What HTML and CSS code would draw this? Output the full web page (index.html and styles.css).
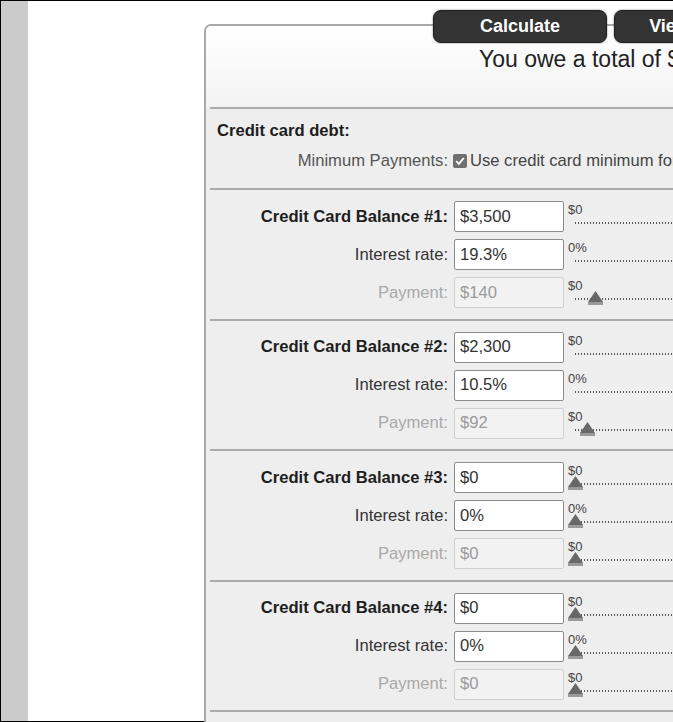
FILE: index.html
```html
<!DOCTYPE html>
<html lang="en">
<head>
<meta charset="utf-8">
<title>Credit card debt calculator</title>
<link rel="stylesheet" href="styles.css">
</head>
<body>
<div class="frame">
  <aside class="rail"></aside>
  <main class="main">
    <section class="panel">
      <div class="panel-top">
        <div class="actions">
          <button class="btn" type="button">Calculate</button>
          <button class="btn" type="button">View Report</button>
        </div>
        <p class="total">You owe a total of $5,800 in credit card debt.</p>
      </div>

      <div class="intro">
        <h2 class="intro-title">Credit card debt:</h2>
        <div class="min-row">
          <span class="min-label">Minimum Payments:</span>
          <span class="min-value">
            <svg class="check" width="14" height="14" viewBox="0 0 14 14"><rect width="14" height="14" rx="2" fill="#707070"/><path d="M3.2 7.2 L5.8 9.8 L10.8 4.2" stroke="#fff" stroke-width="1.9" fill="none"/></svg>
            Use credit card minimum for all payments
          </span>
        </div>
      </div>

      <div class="group">
        <div class="row">
          <label class="lbl lbl-strong">Credit Card Balance #1:</label>
          <input class="field" type="text" value="$3,500">
          <div class="slider"><span class="slider-min">$0</span><div class="track"></div></div>
        </div>
        <div class="row">
          <label class="lbl">Interest rate:</label>
          <input class="field" type="text" value="19.3%">
          <div class="slider"><span class="slider-min">0%</span><div class="track"></div></div>
        </div>
        <div class="row">
          <label class="lbl lbl-muted">Payment:</label>
          <input class="field field-off" type="text" value="$140" disabled>
          <div class="slider"><span class="slider-min">$0</span><div class="track"></div>
            <svg class="thumb" style="left:20px" width="15" height="14" viewBox="0 0 15 14"><polygon points="7.5,0 15,11 0,11" fill="#686868"/><rect x="0" y="11" width="15" height="3" fill="#9a9a9a"/></svg>
          </div>
        </div>
      </div>

      <div class="group">
        <div class="row">
          <label class="lbl lbl-strong">Credit Card Balance #2:</label>
          <input class="field" type="text" value="$2,300">
          <div class="slider"><span class="slider-min">$0</span><div class="track"></div></div>
        </div>
        <div class="row">
          <label class="lbl">Interest rate:</label>
          <input class="field" type="text" value="10.5%">
          <div class="slider"><span class="slider-min">0%</span><div class="track"></div></div>
        </div>
        <div class="row">
          <label class="lbl lbl-muted">Payment:</label>
          <input class="field field-off" type="text" value="$92" disabled>
          <div class="slider"><span class="slider-min">$0</span><div class="track"></div>
            <svg class="thumb" style="left:12px" width="15" height="14" viewBox="0 0 15 14"><polygon points="7.5,0 15,11 0,11" fill="#686868"/><rect x="0" y="11" width="15" height="3" fill="#9a9a9a"/></svg>
          </div>
        </div>
      </div>

      <div class="group">
        <div class="row">
          <label class="lbl lbl-strong">Credit Card Balance #3:</label>
          <input class="field" type="text" value="$0">
          <div class="slider"><span class="slider-min">$0</span><div class="track"></div>
            <svg class="thumb" style="left:0px" width="15" height="14" viewBox="0 0 15 14"><polygon points="7.5,0 15,11 0,11" fill="#686868"/><rect x="0" y="11" width="15" height="3" fill="#9a9a9a"/></svg>
          </div>
        </div>
        <div class="row">
          <label class="lbl">Interest rate:</label>
          <input class="field" type="text" value="0%">
          <div class="slider"><span class="slider-min">0%</span><div class="track"></div>
            <svg class="thumb" style="left:0px" width="15" height="14" viewBox="0 0 15 14"><polygon points="7.5,0 15,11 0,11" fill="#686868"/><rect x="0" y="11" width="15" height="3" fill="#9a9a9a"/></svg>
          </div>
        </div>
        <div class="row">
          <label class="lbl lbl-muted">Payment:</label>
          <input class="field field-off" type="text" value="$0" disabled>
          <div class="slider"><span class="slider-min">$0</span><div class="track"></div>
            <svg class="thumb" style="left:0px" width="15" height="14" viewBox="0 0 15 14"><polygon points="7.5,0 15,11 0,11" fill="#686868"/><rect x="0" y="11" width="15" height="3" fill="#9a9a9a"/></svg>
          </div>
        </div>
      </div>

      <div class="group">
        <div class="row">
          <label class="lbl lbl-strong">Credit Card Balance #4:</label>
          <input class="field" type="text" value="$0">
          <div class="slider"><span class="slider-min">$0</span><div class="track"></div>
            <svg class="thumb" style="left:0px" width="15" height="14" viewBox="0 0 15 14"><polygon points="7.5,0 15,11 0,11" fill="#686868"/><rect x="0" y="11" width="15" height="3" fill="#9a9a9a"/></svg>
          </div>
        </div>
        <div class="row">
          <label class="lbl">Interest rate:</label>
          <input class="field" type="text" value="0%">
          <div class="slider"><span class="slider-min">0%</span><div class="track"></div>
            <svg class="thumb" style="left:0px" width="15" height="14" viewBox="0 0 15 14"><polygon points="7.5,0 15,11 0,11" fill="#686868"/><rect x="0" y="11" width="15" height="3" fill="#9a9a9a"/></svg>
          </div>
        </div>
        <div class="row">
          <label class="lbl lbl-muted">Payment:</label>
          <input class="field field-off" type="text" value="$0" disabled>
          <div class="slider"><span class="slider-min">$0</span><div class="track"></div>
            <svg class="thumb" style="left:0px" width="15" height="14" viewBox="0 0 15 14"><polygon points="7.5,0 15,11 0,11" fill="#686868"/><rect x="0" y="11" width="15" height="3" fill="#9a9a9a"/></svg>
          </div>
        </div>
      </div>

      <div class="group"></div>
    </section>
  </main>
</div>
</body>
</html>
```

FILE: styles.css
```css
html, body {
  margin: 0;
  height: 100%;
  overflow: hidden;
  background: #fff;
}

body {
  font-family: "Liberation Sans", Arial, sans-serif;
  color: #222;
}

.frame {
  display: flex;
  height: 722px;
  box-sizing: border-box;
  border: 1px solid #000;
  border-right: none;
}

.rail {
  flex: none;
  width: 27px;
  background: #cbcbcb;
}

.main {
  flex: 1;
  min-width: 0;
  padding: 23px 0 0 176px;
}

.panel {
  width: 900px;
  border-top: 2px solid #a9a9a9;
  border-left: 2px solid #a9a9a9;
  border-top-left-radius: 7px;
  background: #eee;
}

.panel-top {
  display: flex;
  flex-direction: column;
  border-top-left-radius: 5px;
  background: linear-gradient(180deg, #ffffff 0%, #f3f3f3 100%);
  padding-bottom: 34px;
}

.actions {
  display: flex;
  gap: 7px;
  margin: -16px 0 0 227px;
}

.btn {
  flex: none;
  width: 174px;
  height: 33px;
  box-sizing: border-box;
  border: 1px solid #1f1f1f;
  border-radius: 8px;
  background: #333;
  box-shadow: 0 0 2px rgba(0, 0, 0, 0.55);
  color: #fff;
  font-family: "Liberation Sans", Arial, sans-serif;
  font-size: 18px;
  font-weight: bold;
  padding: 0;
}

.total {
  margin: 2px 0 0;
  padding-left: 273px;
  font-size: 23px;
  line-height: 28px;
  color: #222;
  white-space: nowrap;
}

.intro {
  margin-left: 4px;
  border-top: 2px solid #ababab;
  padding: 12px 0 17px;
}

.intro-title {
  margin: 0 0 0 7px;
  font-size: 16.6px;
  line-height: 20px;
  font-weight: bold;
  color: #1e1e1e;
}

.min-row {
  display: grid;
  grid-template-columns: 238px 1fr;
  column-gap: 5px;
  margin-top: 10px;
  font-size: 16.6px;
  line-height: 20px;
  color: #555;
  white-space: nowrap;
}

.min-label {
  text-align: right;
}

.min-value {
  display: flex;
  align-items: center;
  gap: 3px;
  color: #444;
}

.check {
  flex: none;
}

.group {
  display: flex;
  flex-direction: column;
  gap: 7px;
  margin-left: 4px;
  border-top: 2px solid #ababab;
  padding: 11px 0 10.5px;
}

.row {
  display: grid;
  grid-template-columns: 244px 114px 1fr;
  align-items: center;
  height: 31px;
}

.lbl {
  padding-right: 6px;
  text-align: right;
  font-size: 16.6px;
  color: #333;
  white-space: nowrap;
}

.lbl-strong {
  font-weight: bold;
  color: #1e1e1e;
}

.lbl-muted {
  color: #a9a9a9;
}

.field {
  width: 110px;
  height: 31px;
  box-sizing: border-box;
  margin: 0;
  padding: 0 5px;
  border: 1px solid #8c8c8c;
  border-radius: 2px;
  background: #fff;
  color: #333;
  font-family: "Liberation Sans", Arial, sans-serif;
  font-size: 16.6px;
}

.field-off {
  border-color: #cfcfcf;
  background: #f2f2f2;
  color: #9a9a9a;
}

.slider {
  position: relative;
  align-self: stretch;
}

.slider-min {
  display: block;
  margin-top: 3px;
  font-size: 13px;
  line-height: 12px;
  color: #444;
}

.track {
  height: 2px;
  margin: 6px 0 0 7px;
  background: repeating-linear-gradient(90deg, #555 0 1px, transparent 1px 3px);
}

.thumb {
  position: absolute;
  top: 14px;
}
```
